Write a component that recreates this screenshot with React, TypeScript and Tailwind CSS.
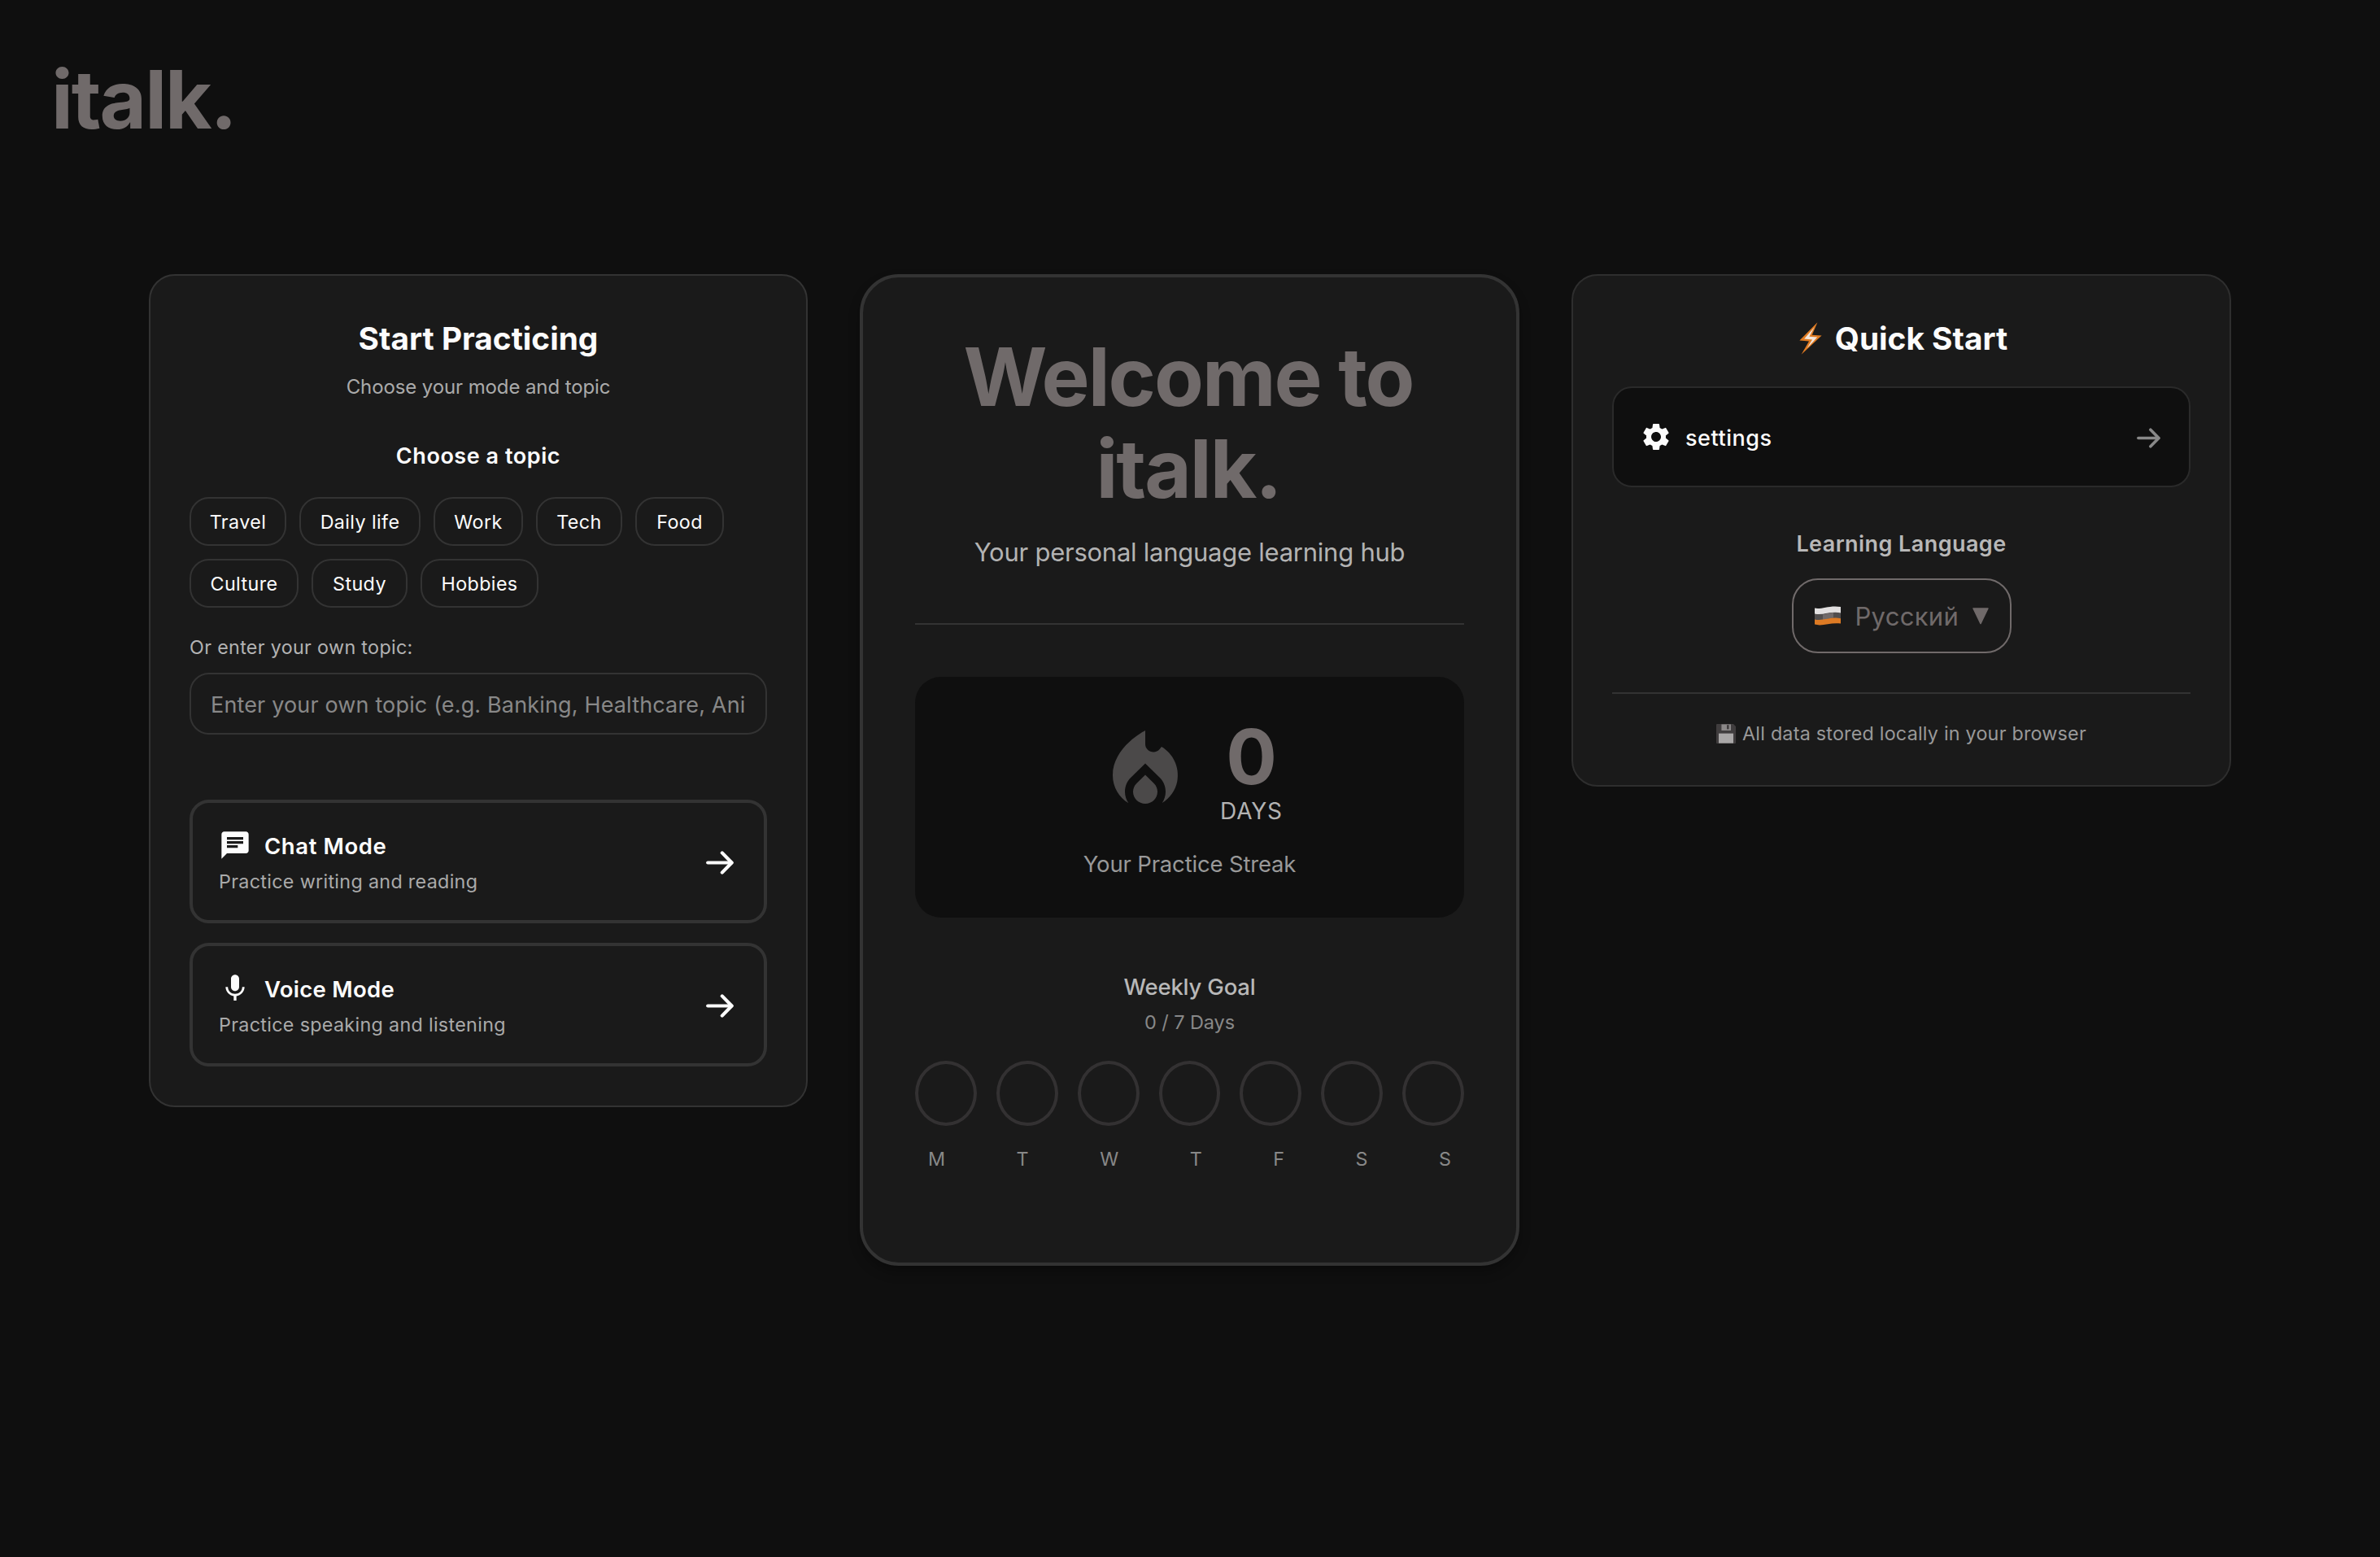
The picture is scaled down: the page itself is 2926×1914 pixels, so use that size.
import React, { useState } from "react";
import { MdChat, MdLocalFireDepartment, MdMic, MdSettings } from "react-icons/md";

const topics = [
  { label: "Travel", width: "w-[119px]" },
  { label: "Daily life", width: "w-[149px]" },
  { label: "Work", width: "w-[110px]" },
  { label: "Tech", width: "w-[106px]" },
  { label: "Food", width: "w-[109px]" },
  { label: "Culture", width: "w-[134px]" },
  { label: "Study", width: "w-[118px]" },
  { label: "Hobbies", width: "w-[145px]" },
];

const modes = [
  {
    title: "Chat Mode",
    description: "Practice writing and reading",
    icon: MdChat,
    tracking: "tracking-[0.6px]",
  },
  {
    title: "Voice Mode",
    description: "Practice speaking and listening",
    icon: MdMic,
    tracking: "tracking-[0.3px]",
  },
];

const weekDays = ["M", "T", "W", "T", "F", "S", "S"];

const ArrowRight: React.FC<{ className?: string }> = ({ className }) => (
  <svg
    className={className}
    viewBox="0 0 34 29"
    fill="none"
    stroke="currentColor"
    strokeWidth={4.2}
    strokeLinecap="round"
    strokeLinejoin="round"
  >
    <path d="M2.2 14.5H31.4" />
    <path d="M19.8 2.4L31.6 14.5L19.8 26.6" />
  </svg>
);

const BoltIcon: React.FC = () => (
  <svg className="ml-[5px] mr-4 h-10 w-7" viewBox="0 0 28 40">
    <path d="M22.4 0.3L0.4 22.6L12 23.6L2.6 39.7L27.6 16.6L15.8 15.8Z" fill="#e07b22" />
    <path d="M18.6 6.2L6.2 20.6L16 21.4L9.4 32.2L22.2 18.6L12.4 17.8Z" fill="#f2e6dc" />
  </svg>
);

const FlagIcon: React.FC = () => (
  <svg className="h-6 w-8" viewBox="0 0 32 24">
    <path d="M0 2.6C8 4.6 18 -1.4 32 1V9C20 6.4 10 12.4 0 10Z" fill="#e2e0e0" />
    <path d="M0 9.4C10 11.8 20 5.8 32 8.4V16.4C20 14 10 19.6 0 17.6Z" fill="#514e4e" />
    <path d="M10 10.6C15 9.4 19 8.2 23 8V14.6C18 15 14 16.4 10 17.2Z" fill="#706a6a" />
    <path d="M0 16.4C10 18.8 20 12.8 32 15.2V21.6C20 19.6 10 25.4 0 22.6Z" fill="#dd7a24" />
  </svg>
);

const FloppyIcon: React.FC = () => (
  <svg className="mr-2 h-6 w-6" viewBox="0 0 24 24">
    <path d="M1 0H21L24 3V23Q24 24 23 24H1Q0 24 0 23V1Q0 0 1 0Z" fill="#403d3e" />
    <path d="M6.4 0.4H18V8H6.4Z" fill="#8b8888" />
    <path d="M13 1.2H15.6V6.4H13Z" fill="#403d3e" />
    <path d="M3 11.6H21V23.6H3Z" fill="#a9a7a7" />
  </svg>
);

const PracticePanel: React.FC = () => {
  const [topic, setTopic] = useState<string>("");

  return (
    <section className="h-[1024px] rounded-[32px] border-2 border-[#333333] bg-[#1a1a1a] p-12">
      <h2 className="text-center text-[38.8px] leading-[58px] font-bold text-[#fcfcfc]">
        Start Practicing
      </h2>
      <p className="mt-[13px] text-center text-[24px] leading-9 tracking-[-0.11px] text-[#aaaaaa]">
        Choose your mode and topic
      </p>

      <h3 className="mt-[47px] text-center text-[27px] leading-10 font-semibold tracking-[0.55px] text-[#fcfcfc]">
        Choose a topic
      </h3>
      <div className="mt-[30px] flex flex-wrap gap-4">
        {topics.map(({ label, width }) => (
          <button
            key={label}
            onClick={() => setTopic(label)}
            className={`h-[60px] rounded-[24px] border-2 border-[#333333] pt-[2px] text-[23.3px] leading-9 tracking-[0.4px] text-[#fcfcfc] ${width}`}
          >
            {label}
          </button>
        ))}
      </div>

      <p className="mt-[31px] text-[23.3px] leading-9 tracking-[0.33px] text-[#b3b3b3]">
        Or enter your own topic:
      </p>
      <input
        value={topic}
        onChange={(e) => setTopic(e.target.value)}
        placeholder="Enter your own topic (e.g. Banking, Healthcare, Ani"
        className="mt-[13px] block h-[76px] w-full rounded-[24px] border-2 border-[#333333] bg-transparent px-6 pt-[2px] text-[27px] tracking-[0.15px] text-white placeholder:text-[#888888]"
      />

      {/* Mode buttons */}
      <div className="mt-20 flex flex-col gap-6">
        {modes.map(({ title, description, icon: Icon, tracking }) => (
          <button
            key={title}
            className="flex h-[152px] items-center justify-between rounded-[24px] border-4 border-[#333333] pr-[37px] pl-8 text-left text-[#fcfcfc]"
          >
            <span className="mt-[3px] flex flex-col">
              <span className="flex items-start gap-4">
                <Icon className="h-10 w-10" />
                <span className={`text-[27.5px] leading-[43px] font-semibold ${tracking}`}>
                  {title}
                </span>
              </span>
              <span className="mt-[4px] text-[23.3px] leading-9 tracking-[0.32px] text-[#aaaaaa]">
                {description}
              </span>
            </span>
            <ArrowRight className="mt-[2px] h-[29px] w-[34px]" />
          </button>
        ))}
      </div>
    </section>
  );
};

const WelcomePanel: React.FC = () => (
  <section className="h-[1219px] rounded-[48px] border-4 border-[#333333] bg-[#1a1a1a] px-16 pt-[66px] text-center shadow-[0_8px_14px_rgba(0,0,0,0.28)]">
    <h1 className="mr-[3px] text-[99.3px] leading-[113px] font-bold tracking-[-2px] text-[#706a6a]">
      Welcome to
      <br />
      italk.
    </h1>
    <p className="mt-[22px] text-[31px] leading-[48px] tracking-[-0.25px] text-[#b3b3b3]">
      Your personal language learning hub
    </p>
    <div className="mt-[63px] h-[2px] bg-[#333333]" />

    {/* Streak */}
    <div className="mt-16 h-[296px] rounded-[32px] bg-[#0f0f0f] pt-[50px]">
      <div className="flex items-start justify-center gap-8">
        <MdLocalFireDepartment className="mt-[6px] h-[120px] w-[120px] text-[#4b4949]" />
        <div className="w-[77px]">
          <div className="text-[93px] leading-[96px] font-bold text-[#706a6a]">0</div>
          <div className="mt-px text-[28px] leading-9 tracking-[0.83px] text-[#b3b3b3]">DAYS</div>
        </div>
      </div>
      <p className="mt-[27px] text-[27.5px] leading-10 tracking-[-0.17px] text-[#999999]">
        Your Practice Streak
      </p>
    </div>

    {/* Weekly goal */}
    <h3 className="mt-[65px] text-[27.5px] leading-10 font-medium tracking-[-0.2px] text-[#b8b8b8]">
      Weekly Goal
    </h3>
    <p className="mt-[6px] text-[23.5px] leading-9 tracking-[-0.08px] text-[#888888]">0 / 7 Days</p>
    <div className="mt-[29px] flex gap-6">
      {weekDays.map((_, index) => (
        <div key={index} className="h-20 flex-1 rounded-[50%] border-4 border-[#333132]" />
      ))}
    </div>
    <div className="mt-[23px] flex justify-between px-4 text-[23.3px] leading-9 text-[#888888]">
      {weekDays.map((day, index) => (
        <span key={index}>{day}</span>
      ))}
    </div>
  </section>
);

const QuickStartPanel: React.FC = () => (
  <section className="h-[630px] rounded-[32px] border-2 border-[#2e2e2e] bg-[#1a1a1a] p-12">
    <h2 className="flex items-center justify-center text-[38.8px] leading-[58px] font-bold text-[#fcfcfc]">
      <BoltIcon />
      Quick Start
    </h2>
    <button className="mt-[30px] flex h-[124px] w-full items-center rounded-[24px] border-2 border-[#2a2a2a] bg-[#0f0f0f] pr-[35px] pl-8 text-[#fcfcfc]">
      <MdSettings className="h-10 w-10" />
      <span className="mt-[3px] ml-4 text-[27px] leading-10 font-medium tracking-[0.54px]">
        settings
      </span>
      <ArrowRight className="mt-[2px] ml-auto h-[25px] w-[29px] text-[#888888]" />
    </button>

    <h3 className="mt-[50px] text-center text-[27px] leading-10 font-semibold tracking-[0.43px] text-[#b8b8b8]">
      Learning Language
    </h3>
    <button className="mx-auto mt-[22px] flex h-[92px] w-[270px] items-center rounded-[32px] border-2 border-[#706a6a] px-[26px] text-[#706a6a]">
      <FlagIcon />
      <span className="mt-[2px] ml-[18px] text-[31px] leading-[48px] tracking-[0.3px]">
        Русский
      </span>
      <svg className="ml-auto h-[21px] w-5" viewBox="0 0 20 21">
        <path
          d="M1 1H19L10 19.6Z"
          fill="currentColor"
          stroke="currentColor"
          strokeWidth={1.4}
          strokeLinejoin="round"
        />
      </svg>
    </button>

    <div className="mt-12 h-[2px] bg-[#333333]" />
    <p className="mt-[31px] flex items-center justify-center text-[23.3px] leading-9 tracking-[0.23px] text-[#999999]">
      <FloppyIcon />
      All data stored locally in your browser
    </p>
  </section>
);

export default function App() {
  return (
    <div className="min-h-[1914px] bg-[#0f0f0f] font-['Inter',sans-serif]">
      <header className="h-[337px] px-[63px] pt-[66px]">
        <div className="text-[99.3px] leading-[112px] font-bold tracking-[-2.08px] text-[#706a6a]">
          italk.
        </div>
      </header>
      <main className="mx-auto grid w-[2560px] grid-cols-[810px_811px_811px] items-start gap-16">
        <PracticePanel />
        <WelcomePanel />
        <QuickStartPanel />
      </main>
    </div>
  );
}
